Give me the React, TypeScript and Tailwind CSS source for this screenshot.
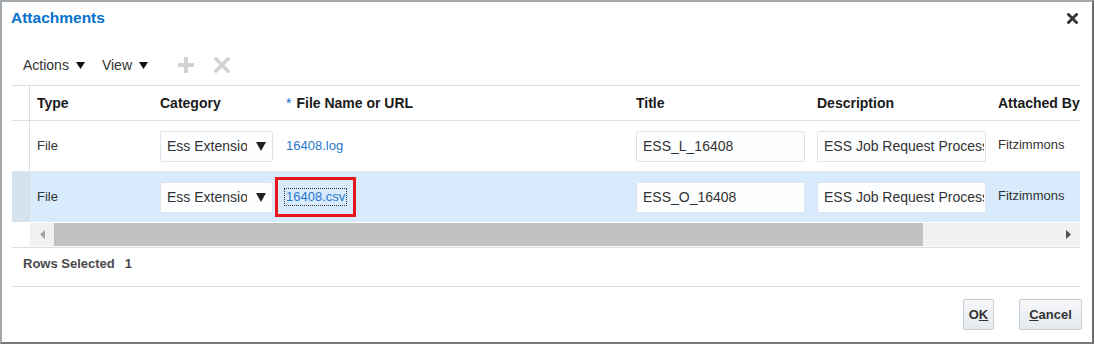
import React from 'react';

const cols = 'grid grid-cols-[18px_122px_126px_350px_181px_181px_90px]';

const Caret = () => (
  <svg width="9" height="7" viewBox="0 0 9 7" className="ml-[7px]">
    <polygon points="0,0 9,0 4.5,7" fill="#111" />
  </svg>
);

const SelectBox = () => (
  <div className="flex items-center w-[113px] h-[31px] border border-[#dfe4ea] rounded-[2px] bg-[#fdfeff] pl-[6px]">
    <span className="w-[80px] overflow-hidden whitespace-nowrap text-[14px] text-[#333]">Ess Extension</span>
    <svg width="10" height="9" viewBox="0 0 10 9" className="ml-[9px]">
      <polygon points="0,0 10,0 5,9" fill="#222" />
    </svg>
  </div>
);

const TextBox = ({ value }: { value: string }) => (
  <div className="flex items-center w-[169px] h-[31px] border border-[#dfe4ea] rounded-[2px] bg-[#fdfeff] pl-[6px] pr-[1px]">
    <span className="overflow-hidden whitespace-nowrap text-[14px] text-[#333]">{value}</span>
  </div>
);

interface RowProps {
  selected?: boolean;
  link: string;
  title: string;
}

const Row = ({ selected, link, title }: RowProps) => (
  <div className={`${cols} ${selected ? 'h-[50px] bg-[#d7ebfc]' : 'h-[51px] border-b border-[#e3e8ed]'}`}>
    <div className={`border-r border-[#d6dfe6] ${selected ? 'bg-[#d5e3ef]' : ''}`} />
    <div className="flex items-center pl-[7px] text-[13px] text-[#333]">File</div>
    <div className="flex items-center pl-[8px]">
      <SelectBox />
    </div>
    <div className="flex items-center pl-[8px]">
      {selected ? (
        <div className="-ml-[11px] flex items-center h-[40px] border-[3px] border-[#e8151b] pl-[6px] pr-[6px]">
          <span className="border border-dotted border-[#333] px-[1px] leading-[16px] text-[13px] text-[#2a77cf]">{link}</span>
        </div>
      ) : (
        <span className="text-[13px] text-[#2a77cf]">{link}</span>
      )}
    </div>
    <div className="flex items-center pl-[8px]">
      <TextBox value={title} />
    </div>
    <div className="flex items-center pl-[8px]">
      <TextBox value="ESS Job Request Process" />
    </div>
    <div className="flex items-center pl-[8px] pb-[3px] text-[13px] leading-[15px] text-[#333]">Fitzimmons</div>
  </div>
);

export default function App() {
  return (
    <div className="w-[1095px] h-[344px] bg-white">
      <div className="w-[1094px] h-[344px] border-2 border-[#a3a8ad] border-r-[#6e6e6e] border-b-[#7a7a7a] flex flex-col font-['Liberation_Sans',Arial,sans-serif]">
        {/* title bar */}
        <div className="flex items-center justify-between h-[32px] pl-[9px] pr-[14px]">
          <span className="text-[15.5px] font-bold text-[#0572ce]">Attachments</span>
          <svg width="11" height="11" viewBox="0 0 11 11">
            <path d="M1.5 1.5 L9.5 9.5 M9.5 1.5 L1.5 9.5" stroke="#333" strokeWidth="2.8" strokeLinecap="square" />
          </svg>
        </div>

        {/* toolbar */}
        <div className="flex items-center h-[30px] mt-[16px] pl-[21px] text-[14px] text-[#333]">
          <span>Actions</span>
          <Caret />
          <span className="ml-[17px]">View</span>
          <Caret />
          <svg width="16" height="16" viewBox="0 0 16 16" className="ml-[30px]">
            <path d="M8 0 V16 M0 8 H16" stroke="#d2d2d2" strokeWidth="4" />
          </svg>
          <svg width="16" height="16" viewBox="0 0 16 16" className="ml-[20px]">
            <path d="M2 2 L14 14 M14 2 L2 14" stroke="#d2d2d2" strokeWidth="3.6" strokeLinecap="square" />
          </svg>
        </div>

        {/* table */}
        <div className="mt-[5px] pl-[10px] pr-[12px]">
          <div className={`${cols} h-[36px] border-t border-b border-[#d6dfe6] text-[14px] font-bold text-[#1a1a1a]`}>
            <div className="border-r border-[#d6dfe6]" />
            <div className="flex items-center pl-[7px]">Type</div>
            <div className="flex items-center pl-[8px]">Category</div>
            <div className="flex items-center pl-[8px]">
              <span className="self-start mt-[7px] mr-[5px] text-[14px] font-normal text-[#0572ce]">*</span>
              File Name or URL
            </div>
            <div className="flex items-center pl-[8px]">Title</div>
            <div className="flex items-center pl-[8px]">Description</div>
            <div className="flex items-center pl-[8px] whitespace-nowrap overflow-hidden">Attached By</div>
          </div>
          <Row link="16408.log" title="ESS_L_16408" />
          <Row selected link="16408.csv" title="ESS_O_16408" />

          {/* horizontal scrollbar */}
          <div className="flex h-[26px] border-b border-[#d6dfe6] pl-[18px] py-[1px]">
            <div className="flex items-center justify-center w-[24px] bg-[#f1f1f1]">
              <svg width="5" height="9" viewBox="0 0 5 9">
                <polygon points="5,0 5,9 0,4.5" fill="#a3a3a3" />
              </svg>
            </div>
            <div className="w-[869px] bg-[#c1c1c1]" />
            <div className="flex flex-1 items-center justify-end pr-[9px] bg-[#f1f1f1]">
              <svg width="5" height="9" viewBox="0 0 5 9">
                <polygon points="0,0 0,9 5,4.5" fill="#505050" />
              </svg>
            </div>
          </div>

          {/* status */}
          <div className="h-[39px] border-b border-[#d6dfe6] pl-[11px] pt-[8px] text-[13px] leading-[15px] font-bold text-[#4a4a4a]">
            Rows Selected<span className="ml-[10px]">1</span>
          </div>
        </div>

        {/* buttons */}
        <div className="flex justify-end gap-[25px] mt-[12px] pr-[10px]">
          <button className="w-[31px] h-[31px] border border-[#c5cdd5] rounded-[2px] bg-gradient-to-b from-[#f6f7f9] to-[#e6eaee] text-[13px] font-bold text-[#333]">
            O<span className="underline">K</span>
          </button>
          <button className="w-[63px] h-[31px] border border-[#c5cdd5] rounded-[2px] bg-gradient-to-b from-[#f6f7f9] to-[#e6eaee] text-[13px] font-bold text-[#333]">
            <span className="underline">C</span>ancel
          </button>
        </div>
      </div>
    </div>
  );
}
